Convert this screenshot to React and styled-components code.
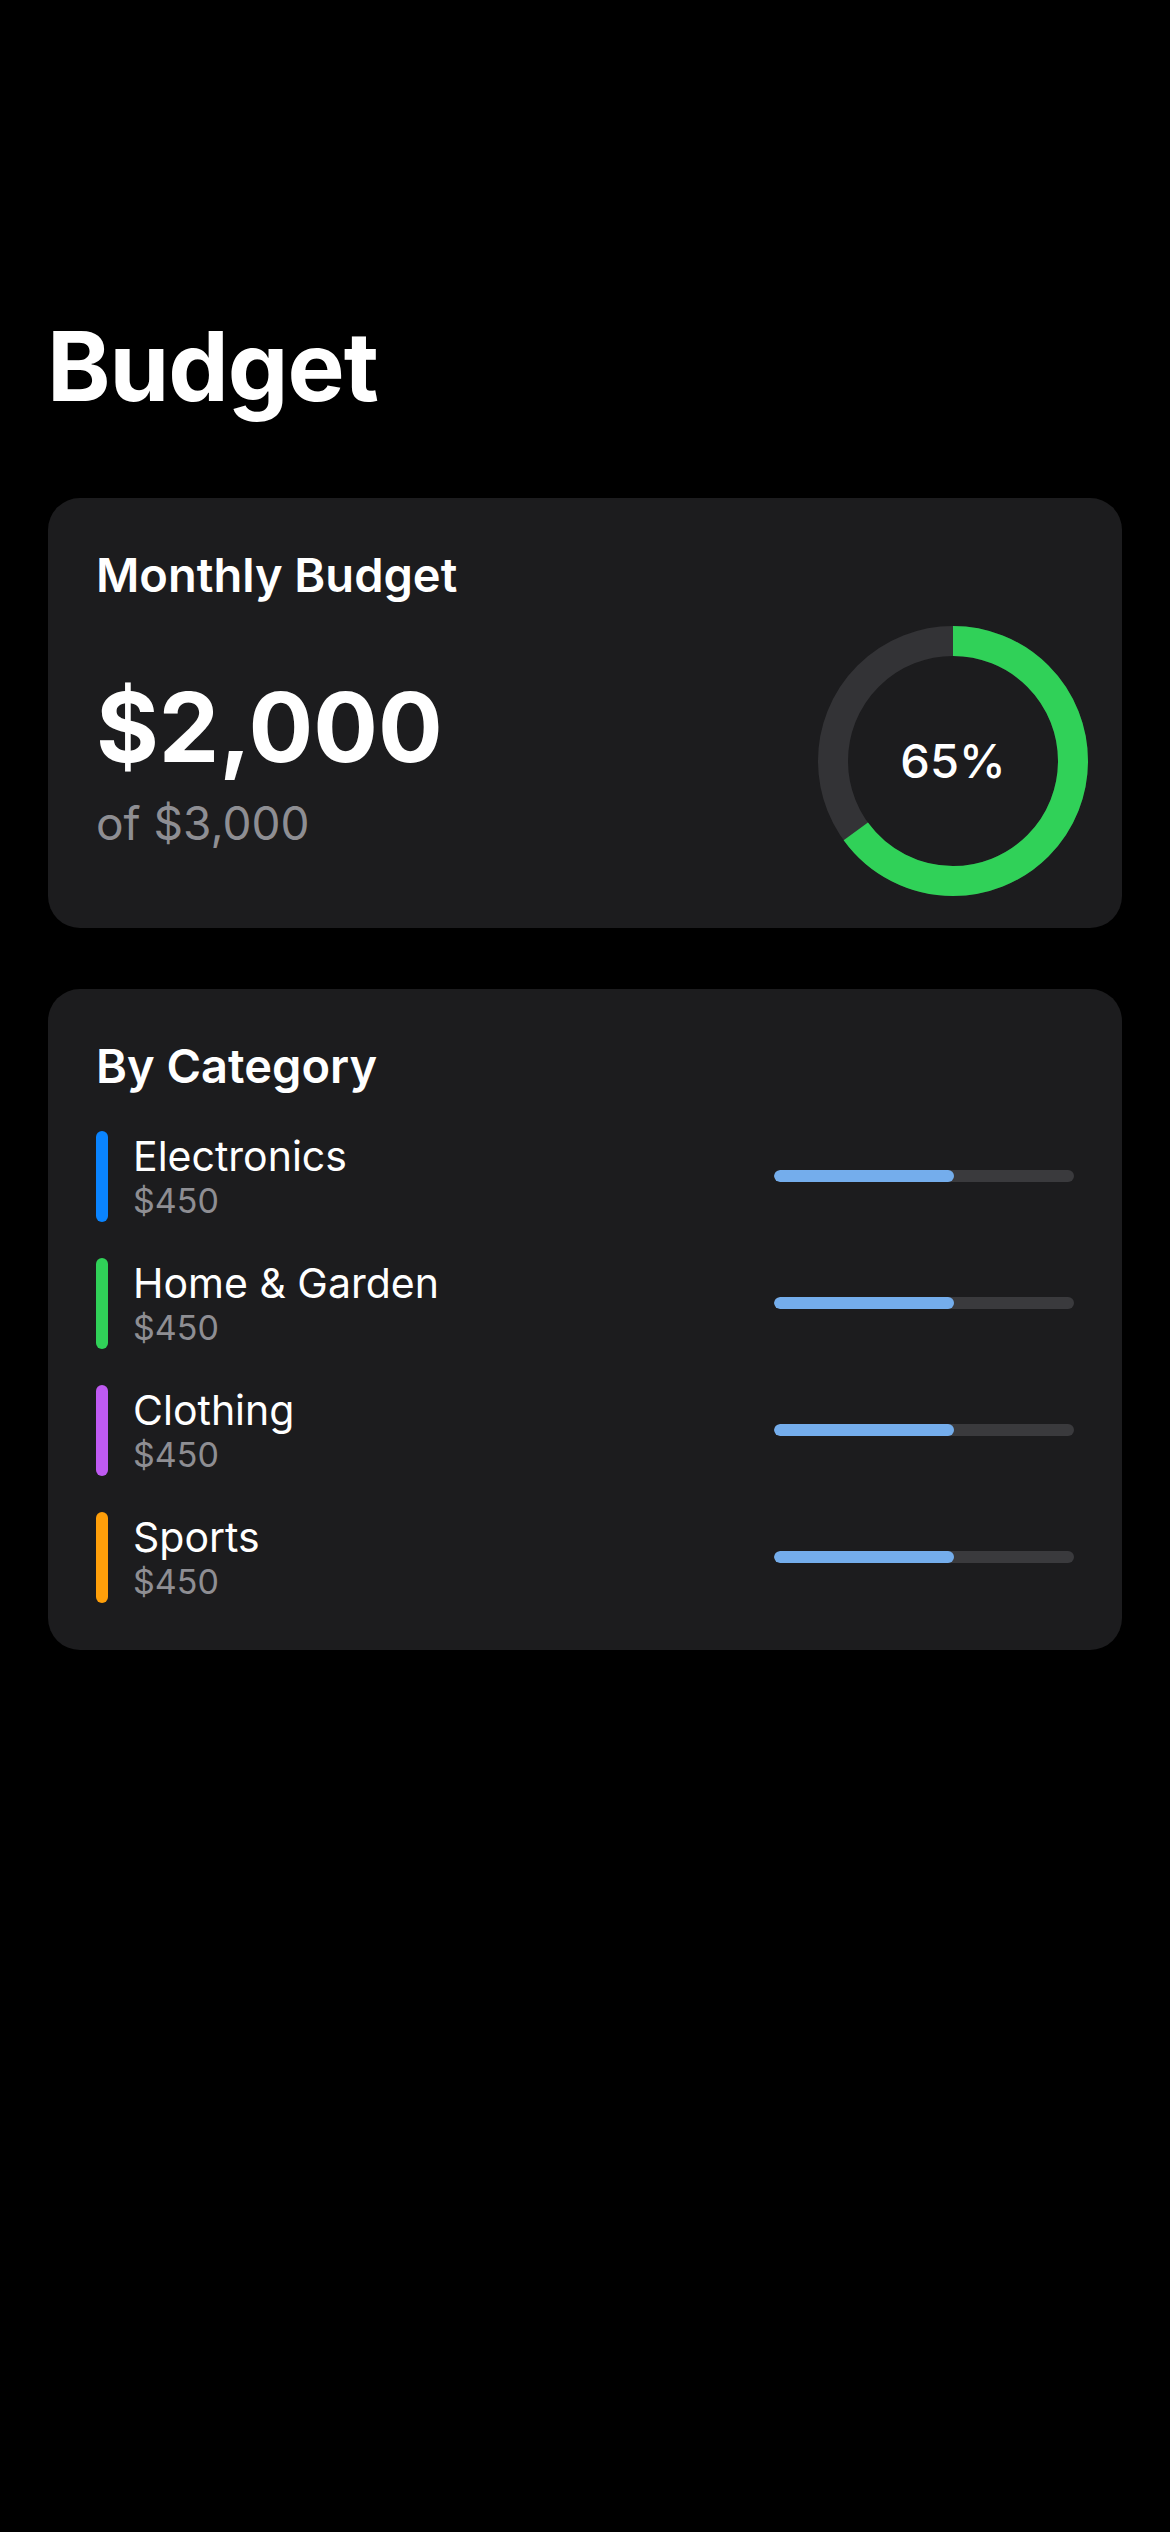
import React from 'react';
import styled, { createGlobalStyle } from 'styled-components';

const GlobalStyle = createGlobalStyle`
  html, body {
    margin: 0;
    padding: 0;
    background: #000;
  }
  body {
    font-family: Inter, "Noto Sans", "Liberation Sans", sans-serif;
    color: #fff;
    -webkit-font-smoothing: antialiased;
  }
`;

const Page = styled.div`
  min-height: 2532px;
  padding: 309px 48px 0;
  box-sizing: border-box;
  background: #000;
`;

const Title = styled.h1`
  margin: 0 0 74px -1px;
  font-size: 96px;
  line-height: 1.2;
  font-weight: 700;
  letter-spacing: -1px;
`;

const Card = styled.section`
  background: #1c1c1e;
  border-radius: 32px;
  padding: 49px ${p => p.$right}px ${p => p.$bottom}px 48px;
  margin-bottom: 61px;
`;

const CardTitle = styled.h2`
  margin: 0;
  font-size: 47px;
  line-height: 1.2;
  font-weight: 600;
`;

const SummaryRow = styled.div`
  display: flex;
  align-items: center;
  justify-content: space-between;
  margin-top: 22px;
`;

const Amounts = styled.div`
  display: flex;
  flex-direction: column;
`;

const Spent = styled.div`
  font-size: 96px;
  line-height: 1.2;
  font-weight: 700;
`;

const Total = styled.div`
  margin-top: 10px;
  font-size: 46px;
  line-height: 1.2;
  color: #8e8e93;
`;

const RingWrap = styled.div`
  position: relative;
  width: 270px;
  height: 270px;
`;

const RingLabel = styled.div`
  position: absolute;
  inset: 0;
  display: flex;
  align-items: center;
  justify-content: center;
  font-size: 47px;
  font-weight: 500;
`;

const List = styled.div`
  display: flex;
  flex-direction: column;
  gap: 36px;
  margin-top: 37px;
`;

const Row = styled.div`
  display: flex;
  align-items: stretch;
  justify-content: space-between;
  height: 91px;
`;

const Left = styled.div`
  display: flex;
  align-items: stretch;
  gap: 25px;
`;

const Swatch = styled.div`
  width: 12px;
  border-radius: 6px;
  background: ${p => p.$color};
`;

const Info = styled.div`
  display: flex;
  flex-direction: column;
  padding-top: 1px;
`;

const Name = styled.div`
  font-size: 41px;
  line-height: 1.2;
  font-weight: 400;
`;

const Amount = styled.div`
  font-size: 34px;
  line-height: 1.15;
  color: #8e8e93;
`;

const Track = styled.div`
  align-self: center;
  width: 300px;
  height: 12px;
  border-radius: 6px;
  background: #3a3a3d;
  overflow: hidden;
`;

const Fill = styled.div`
  height: 100%;
  border-radius: 6px;
  background: #74adec;
`;

const categories = [
  { name: 'Electronics', amount: '$450', color: '#0a84ff', pct: 60 },
  { name: 'Home & Garden', amount: '$450', color: '#30d158', pct: 60 },
  { name: 'Clothing', amount: '$450', color: '#bf5af2', pct: 60 },
  { name: 'Sports', amount: '$450', color: '#ff9f0a', pct: 60 },
];

function Ring({ pct }) {
  const r = 120;
  const c = 2 * Math.PI * r;
  return (
    <RingWrap>
      <svg width="270" height="270" viewBox="0 0 270 270">
        <circle cx="135" cy="135" r={r} fill="none" stroke="#333336" strokeWidth="30" />
        <circle
          cx="135"
          cy="135"
          r={r}
          fill="none"
          stroke="#30d158"
          strokeWidth="30"
          strokeDasharray={`${(c * pct) / 100} ${c}`}
          transform="rotate(-90 135 135)"
        />
      </svg>
      <RingLabel>{pct}%</RingLabel>
    </RingWrap>
  );
}

export default function App() {
  return (
    <Page>
      <GlobalStyle />
      <Title>Budget</Title>
      <Card $right={34} $bottom={32}>
        <CardTitle>Monthly Budget</CardTitle>
        <SummaryRow>
          <Amounts>
            <Spent>$2,000</Spent>
            <Total>of $3,000</Total>
          </Amounts>
          <Ring pct={65} />
        </SummaryRow>
      </Card>
      <Card $right={48} $bottom={47}>
        <CardTitle>By Category</CardTitle>
        <List>
          {categories.map(c => (
            <Row key={c.name}>
              <Left>
                <Swatch $color={c.color} />
                <Info>
                  <Name>{c.name}</Name>
                  <Amount>{c.amount}</Amount>
                </Info>
              </Left>
              <Track>
                <Fill style={{ width: `${c.pct}%` }} />
              </Track>
            </Row>
          ))}
        </List>
      </Card>
    </Page>
  );
}
